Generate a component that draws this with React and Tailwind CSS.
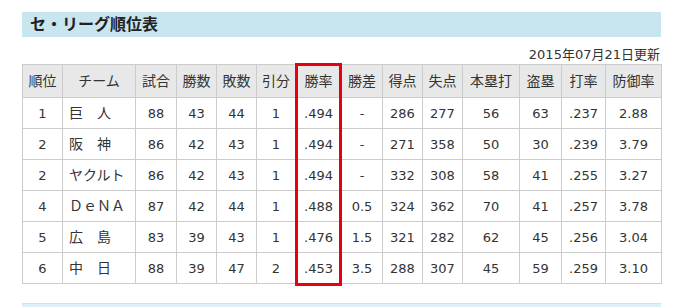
const headers = ['順位', 'チーム', '試合', '勝数', '敗数', '引分', '勝率', '勝差', '得点', '失点', '本塁打', '盗塁', '打率', '防御率']
const widths = [40, 73, 41, 40, 40, 39, 46, 41, 40, 40, 57, 42, 44, 56]

const rows = [
  ['1', '巨　人', '88', '43', '44', '1', '.494', '-', '286', '277', '56', '63', '.237', '2.88'],
  ['2', '阪　神', '86', '42', '43', '1', '.494', '-', '271', '358', '50', '30', '.239', '3.79'],
  ['2', 'ヤクルト', '86', '42', '43', '1', '.494', '-', '332', '308', '58', '41', '.255', '3.27'],
  ['4', 'ＤｅＮＡ', '87', '42', '44', '1', '.488', '0.5', '324', '362', '70', '41', '.257', '3.78'],
  ['5', '広　島', '83', '39', '43', '1', '.476', '1.5', '321', '282', '62', '45', '.256', '3.04'],
  ['6', '中　日', '88', '39', '47', '2', '.453', '3.5', '288', '307', '45', '59', '.259', '3.10'],
]

export default function App() {
  return (
    <div
      className="w-[676px] h-[307px] overflow-hidden bg-white text-[#333]"
      style={{ fontFamily: '"DejaVu Sans", "Noto Sans CJK JP", sans-serif' }}
    >
      <div className="mx-[22px] w-[639px] pt-3">
        {/* Title */}
        <div className="h-[25px] bg-[#c8e6f0] pl-[8px] flex items-center">
          <h2 className="text-[16px] font-bold leading-none text-[#222]">セ・リーグ順位表</h2>
        </div>

        {/* Updated date */}
        <div className="h-[27px] flex items-end justify-end pb-[3px] pr-[1px] text-[13px] leading-none">
          2015年07月21日更新
        </div>

        {/* Standings */}
        <div className="relative">
          <table className="w-[639px] table-fixed border-collapse text-[13px] leading-none">
            <colgroup>
              {widths.map((w, i) => (
                <col key={i} style={{ width: w }} />
              ))}
            </colgroup>
            <thead>
              <tr className="h-[33px] bg-[#e8e8e8]">
                {headers.map((h) => (
                  <th key={h} className="border border-[#ccc] font-normal text-center p-0 text-[14px]">
                    {h}
                  </th>
                ))}
              </tr>
            </thead>
            <tbody>
              {rows.map((r, ri) => (
                <tr key={ri} className="h-[31px]">
                  {r.map((c, ci) => (
                    <td
                      key={ci}
                      className={
                        ci === 1
                          ? 'border border-[#ccc] text-left pl-[6px] whitespace-nowrap text-[14px]'
                          : 'border border-[#ccc] text-center p-0'
                      }
                    >
                      {c}
                    </td>
                  ))}
                </tr>
              ))}
            </tbody>
          </table>
          {/* highlight on 勝率 */}
          <div className="absolute left-[273px] top-[-1px] w-[47px] h-[223px] border-[3px] border-[#e60012] pointer-events-none" />
        </div>

        {/* next section bar */}
        <div className="mt-[19px] h-[20px] bg-[#dcf0f8] border-t border-[#c8e6f0]" />
      </div>
    </div>
  )
}
